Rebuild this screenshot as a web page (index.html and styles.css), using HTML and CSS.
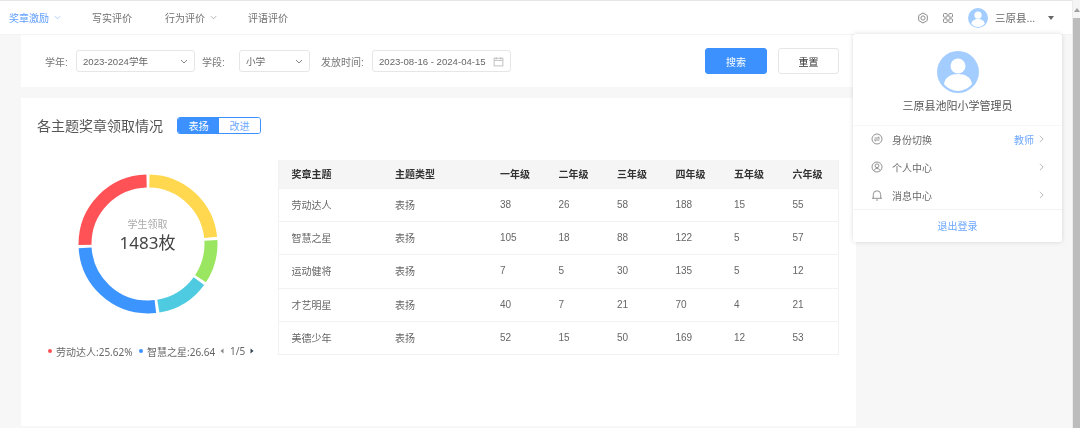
FILE: index.html
```html
<!DOCTYPE html>
<html lang="zh">
<head>
<meta charset="utf-8">
<title>奖章激励</title>
<link rel="stylesheet" href="styles.css">
</head>
<body>
<div class="app">
  <div class="page">
    <header class="topbar">
      <nav class="nav">
        <a class="nav-item nav-active nav-w1">奖章激励<svg class="chev" viewBox="0 0 8 5"><path d="M1 1l3 3 3-3"/></svg></a>
        <a class="nav-item nav-w2">写实评价</a>
        <a class="nav-item nav-w3">行为评价<svg class="chev" viewBox="0 0 8 5"><path d="M1 1l3 3 3-3"/></svg></a>
        <a class="nav-item">评语评价</a>
      </nav>
      <div class="tools">
        <svg class="tool-icon" viewBox="0 0 12 12"><path d="M6 1l3.900 2.200a.8.800 0 0 1 .4.700v4.200a.8.800 0 0 1-.4.700L6 11 2.100 8.800a.8.800 0 0 1-.4-.7V3.900a.8.800 0 0 1 .4-.7z"/><circle cx="6" cy="6" r="2.100"/></svg>
        <svg class="tool-icon tool-grid" viewBox="0 0 12 12"><rect x="1.500" y="1.500" width="3.700" height="3.700" rx="1"/><rect x="6.800" y="1.500" width="3.700" height="3.700" rx="1"/><rect x="1.500" y="6.800" width="3.700" height="3.700" rx="1"/><rect x="6.800" y="6.800" width="3.700" height="3.700" rx="1"/></svg>
        <svg class="avatar-small" viewBox="0 0 42 42"><circle cx="21" cy="21" r="21" fill="#a3cdff"/><circle cx="21" cy="15" r="7.500" fill="#fff"/><path d="M7 33c1-7 7-10 14-10s13 3 14 10c-3 4-9 7-14 7s-11-3-14-7z" fill="#fff"/></svg>
        <span class="user-name">三原县...</span>
        <span class="caret"></span>
      </div>
    </header>

    <main class="content">
      <section class="filter-card">
        <label class="f-label f-l1">学年:</label>
        <div class="field f-year"><span>2023-2024学年</span><svg class="field-chev" viewBox="0 0 8 5"><path d="M1 1l3 3 3-3"/></svg></div>
        <label class="f-label f-l2">学段:</label>
        <div class="field f-stage"><span>小学</span><svg class="field-chev" viewBox="0 0 8 5"><path d="M1 1l3 3 3-3"/></svg></div>
        <label class="f-label f-l3">发放时间:</label>
        <div class="field f-date"><span>2023-08-16 - 2024-04-15</span><svg class="cal" viewBox="0 0 10 10"><rect x="1" y="2" width="8" height="7"/><path d="M1 4h8M3 1v2M7 1v2"/></svg></div>
        <button class="btn btn-primary">搜索</button>
        <button class="btn btn-plain">重置</button>
      </section>

      <section class="main-card">
        <div class="title-row">
          <h2 class="title">各主题奖章领取情况</h2>
          <div class="toggle"><span class="toggle-on">表扬</span><span class="toggle-off">改进</span></div>
        </div>
        <div class="body-row">
          <div class="chart-col">
            <div class="donut">
              <svg class="donut-svg" viewBox="0 0 140 140">
                <g transform="rotate(-90 70 70)" fill="none" stroke-width="13">
                  <circle cx="70" cy="70" r="63" pathLength="1483" stroke="#ffd84f" stroke-dasharray="340 1143" stroke-dashoffset="-5.500"/>
                  <circle cx="70" cy="70" r="63" pathLength="1483" stroke="#9be660" stroke-dasharray="152 1331" stroke-dashoffset="-356.500"/>
                  <circle cx="70" cy="70" r="63" pathLength="1483" stroke="#4ecbe0" stroke-dasharray="183 1300" stroke-dashoffset="-519.500"/>
                  <circle cx="70" cy="70" r="63" pathLength="1483" stroke="#3c94ff" stroke-dasharray="384 1099" stroke-dashoffset="-713.500"/>
                  <circle cx="70" cy="70" r="63" pathLength="1483" stroke="#ff5257" stroke-dasharray="369 1114" stroke-dashoffset="-1108.500"/>
                </g>
              </svg>
              <div class="donut-center">
                <div class="donut-label">学生领取</div>
                <div class="donut-value">1483枚</div>
              </div>
            </div>
            <div class="legend">
              <i class="dot dot-red"></i><span class="legend-a">劳动达人:25.62%</span>
              <i class="dot dot-blue"></i><span class="legend-b">智慧之星:26.64</span>
              <svg class="pager pager-prev" viewBox="0 0 4 6"><path d="M3.500 0.500v5L0.500 3z"/></svg>
              <span class="pager-text">1/5</span>
              <svg class="pager pager-next" viewBox="0 0 4 6"><path d="M0.500 0.500v5L3.500 3z"/></svg>
            </div>
          </div>
          <table class="grade-table">
            <colgroup>
              <col class="col-name"><col class="col-type"><col class="col-g"><col class="col-g"><col class="col-g"><col class="col-g"><col class="col-g"><col class="col-g">
            </colgroup>
            <thead>
              <tr><th>奖章主题</th><th>主题类型</th><th>一年级</th><th>二年级</th><th>三年级</th><th>四年级</th><th>五年级</th><th>六年级</th></tr>
            </thead>
            <tbody>
              <tr><td>劳动达人</td><td>表扬</td><td>38</td><td>26</td><td>58</td><td>188</td><td>15</td><td>55</td></tr>
              <tr><td>智慧之星</td><td>表扬</td><td>105</td><td>18</td><td>88</td><td>122</td><td>5</td><td>57</td></tr>
              <tr><td>运动健将</td><td>表扬</td><td>7</td><td>5</td><td>30</td><td>135</td><td>5</td><td>12</td></tr>
              <tr><td>才艺明星</td><td>表扬</td><td>40</td><td>7</td><td>21</td><td>70</td><td>4</td><td>21</td></tr>
              <tr><td>美德少年</td><td>表扬</td><td>52</td><td>15</td><td>50</td><td>169</td><td>12</td><td>53</td></tr>
            </tbody>
          </table>
        </div>
      </section>
    </main>

    <aside class="user-menu">
      <div class="menu-head">
        <svg class="avatar-large" viewBox="0 0 42 42"><circle cx="21" cy="21" r="21" fill="#a3cdff"/><circle cx="21" cy="15" r="7.500" fill="#fff"/><path d="M7 33c1-7 7-10 14-10s13 3 14 10c-3 4-9 7-14 7s-11-3-14-7z" fill="#fff"/></svg>
        <div class="menu-name">三原县池阳小学管理员</div>
      </div>
      <ul class="menu-list">
        <li class="menu-row">
          <svg class="menu-icon" viewBox="0 0 12 12"><circle cx="6" cy="6" r="5"/><path d="M3.500 5h5L7 3.700M8.500 7h-5L5 8.300"/></svg>
          <span class="menu-text">身份切换</span><span class="menu-extra">教师</span>
          <svg class="menu-arrow" viewBox="0 0 6 10"><path d="M1 1l4 4-4 4"/></svg>
        </li>
        <li class="menu-row">
          <svg class="menu-icon" viewBox="0 0 12 12"><circle cx="6" cy="6" r="5"/><circle cx="6" cy="4.800" r="1.900"/><path d="M2.800 9.700c.6-1.500 1.800-2.200 3.200-2.200s2.600.7 3.200 2.200"/></svg>
          <span class="menu-text">个人中心</span>
          <svg class="menu-arrow" viewBox="0 0 6 10"><path d="M1 1l4 4-4 4"/></svg>
        </li>
        <li class="menu-row">
          <svg class="menu-icon" viewBox="0 0 12 12"><path d="M1 9.300h10M2.300 9.300V5.500a3.700 3.700 0 0 1 7.400 0v3.800M5 11h2"/></svg>
          <span class="menu-text">消息中心</span>
          <svg class="menu-arrow" viewBox="0 0 6 10"><path d="M1 1l4 4-4 4"/></svg>
        </li>
      </ul>
      <div class="menu-foot">退出登录</div>
    </aside>
  </div>
  <div class="scrollbar"><span class="scroll-up"></span><span class="scroll-thumb"></span></div>
</div>
</body>
</html>
```

FILE: styles.css
```css
* { box-sizing: border-box; }
html, body { margin: 0; height: 100%; overflow: hidden; }
body {
  font-family: "Liberation Sans", "Noto Sans CJK SC", sans-serif;
  font-size: 10px;
  color: #666;
  background: #f7f7f7;
}
.app { display: flex; height: 428px; width: 1080px; filter: blur(0.45px); }
.page { position: relative; width: 1072px; flex: none; }

.scrollbar { width: 8px; display: flex; flex-direction: column; background: #f1f1f1; border-left: 1px solid #ececec; }
.scroll-up { height: 18px; flex: none; background: #f5f5f5; display: flex; justify-content: flex-end; padding: 8px 0 0; }
.scroll-up::before { content: ""; width: 0; height: 0; border: 3px solid transparent; border-bottom: 4px solid #a0a0a0; border-top: 0; }
.scroll-thumb { flex: 1; background: #bcbcbc; }

/* top bar */
.topbar {
  height: 35px;
  display: flex;
  align-items: center;
  justify-content: space-between;
  padding: 0 18px 0 9px;
  background: #fff;
  border-top: 1px solid #e6e6e6;
  border-bottom: 1px solid #f3f3f3;
}
.nav { display: flex; align-items: center; }
.nav-item { display: flex; align-items: center; color: #6f6f6f; font-size: 10px; white-space: nowrap; }
.nav-active { color: #5d9dff; }
.nav-w1 { width: 83px; }
.nav-w2 { width: 73px; }
.nav-w3 { width: 83px; }
.chev { width: 7px; height: 5px; margin-left: 5px; fill: none; stroke: #a8a8a8; stroke-width: 1; }
.nav-active .chev { stroke: #9cc4ff; }
.tools { display: flex; align-items: center; }
.tool-icon { width: 12px; height: 12px; fill: none; stroke: #8c8c8c; stroke-width: 1; }
.tool-grid { margin-left: 13px; }
.avatar-small { width: 20px; height: 20px; margin-left: 14px; }
.user-name { width: 38px; margin-left: 7px; font-size: 10.500px; color: #666; white-space: nowrap; }
.caret { margin-left: 15px; border: 3.500px solid transparent; border-top: 4px solid #666; border-bottom: 0; }

/* content */
.content { width: 856px; padding-left: 21px; }

.filter-card {
  height: 52px;
  display: flex;
  align-items: center;
  padding: 0 17px 0 24px;
  background: #fff;
}
.f-label { color: #777; white-space: nowrap; }
.f-l1 { width: 31px; }
.f-l2 { width: 37px; margin-left: 7px; }
.f-l3 { width: 51px; margin-left: 11px; }
.field {
  height: 22px;
  display: flex;
  align-items: center;
  justify-content: space-between;
  padding: 0 6px;
  border: 1px solid #e6e6e6;
  border-radius: 3px;
  color: #666;
  font-size: 9.600px;
  white-space: nowrap;
}
.f-year { width: 119px; }
.f-stage { width: 71px; }
.f-date { width: 139px; }
.field-chev { width: 8px; height: 5px; fill: none; stroke: #888; stroke-width: 1; }
.cal { width: 11px; height: 11px; fill: none; stroke: #bbb; stroke-width: .8; }
.btn {
  height: 26px;
  width: 62px;
  border-radius: 3px;
  font: inherit;
  padding: 0;
}
.btn-primary { margin-left: auto; background: #3c91ff; border: 1px solid #3c91ff; color: #fff; }
.btn-plain { margin-left: 11px; width: 61px; background: #fff; border: 1px solid #e6e6e6; color: #333; }

.main-card { height: 328px; margin-top: 11px; background: #fff; }
.title-row { height: 62px; display: flex; align-items: flex-start; padding: 19px 0 0 16px; }
.title { margin: 0; width: 140px; font-size: 14px; line-height: 18px; font-weight: 400; color: #555; white-space: nowrap; }
.toggle { display: flex; height: 17px; width: 84px; border: 1px solid #3c91ff; border-radius: 3px; overflow: hidden; }
.toggle span { flex: 1; display: flex; align-items: center; justify-content: center; }
.toggle-on { background: #3c91ff; color: #fff; }
.toggle-off { background: #fff; color: #6ea8ff; }

.body-row { display: flex; align-items: flex-start; }
.chart-col { width: 257px; flex: none; }
.donut { position: relative; width: 140px; height: 140px; margin: 14px 0 0 56.500px; }
.donut-svg { display: block; width: 140px; height: 140px; }
.donut-center { position: absolute; inset: 0 0 16px; display: flex; flex-direction: column; align-items: center; justify-content: center; }
.donut-label { color: #aaa; line-height: 14px; font-family: "Noto Sans", "Noto Sans CJK SC", sans-serif; }
.donut-value { font-family: "Noto Sans", "Noto Sans CJK SC", sans-serif; font-size: 17px; line-height: 24px; color: #444; }
.legend {
  display: flex;
  align-items: center;
  height: 12px;
  margin: 31px 0 0 27px;
  font-family: "Noto Sans", "Noto Sans CJK SC", sans-serif;
  color: #666;
  white-space: nowrap;
}
.dot { width: 4px; height: 4px; border-radius: 50%; flex: none; }
.dot-red { background: #ff5257; }
.dot-blue { background: #3c94ff; }
.legend-a { width: 83px; margin-left: 4px; }
.legend-b { width: 73px; margin-left: 4px; }
.pager { width: 4px; height: 6px; }
.pager-prev { fill: #888; }
.pager-next { fill: #2f4554; margin-left: 5px; }
.pager-text { width: 15px; margin-left: 6px; }

.grade-table {
  width: 560px;
  height: 195px;
  border-collapse: collapse;
  table-layout: fixed;
  border: 1px solid #f2f2f2;
  border-top: 0;
}
.col-name { width: 104px; }
.col-type { width: 105px; }
.col-g { width: 58.500px; }
.grade-table th, .grade-table td { padding: 0 0 1px 12.500px; text-align: left; font-size: 10px; }
.grade-table th { height: 28px; background: #f5f5f5; color: #333; font-weight: 700; }
.grade-table td { height: 33.400px; color: #666; border-top: 1px solid #f2f2f2; }

/* dropdown */
.user-menu {
  position: absolute;
  top: 34px;
  left: 853px;
  width: 209px;
  height: 208px;
  background: #fff;
  border-radius: 3px;
  box-shadow: 0 0 5px rgba(0, 0, 0, .14);
  display: flex;
  flex-direction: column;
}
.menu-head { height: 92px; display: flex; flex-direction: column; align-items: center; padding-top: 17px; border-bottom: 1px solid #f7f7f7; }
.avatar-large { width: 42px; height: 42px; display: block; }
.menu-name { margin-top: 5px; font-size: 11px; line-height: 16px; color: #555; white-space: nowrap; }
.menu-list { list-style: none; margin: 0; padding: 0; height: 84px; border-bottom: 1px solid #f3f3f3; }
.menu-row { height: 28px; display: flex; align-items: center; padding: 0 18px 2px 18px; color: #6a6a6a; }
.menu-icon { width: 12px; height: 12px; fill: none; stroke: #888; stroke-width: .9; flex: none; }
.menu-text { margin-left: 9px; }
.menu-extra { margin-left: auto; color: #6ea8ff; }
.menu-arrow { width: 5px; height: 8px; margin-left: 5px; fill: none; stroke: #aaa; stroke-width: 1; flex: none; }
.menu-text + .menu-arrow { margin-left: auto; }
.menu-foot { flex: 1; display: flex; align-items: center; justify-content: center; padding-bottom: 2px; color: #6ea8ff; }
```
